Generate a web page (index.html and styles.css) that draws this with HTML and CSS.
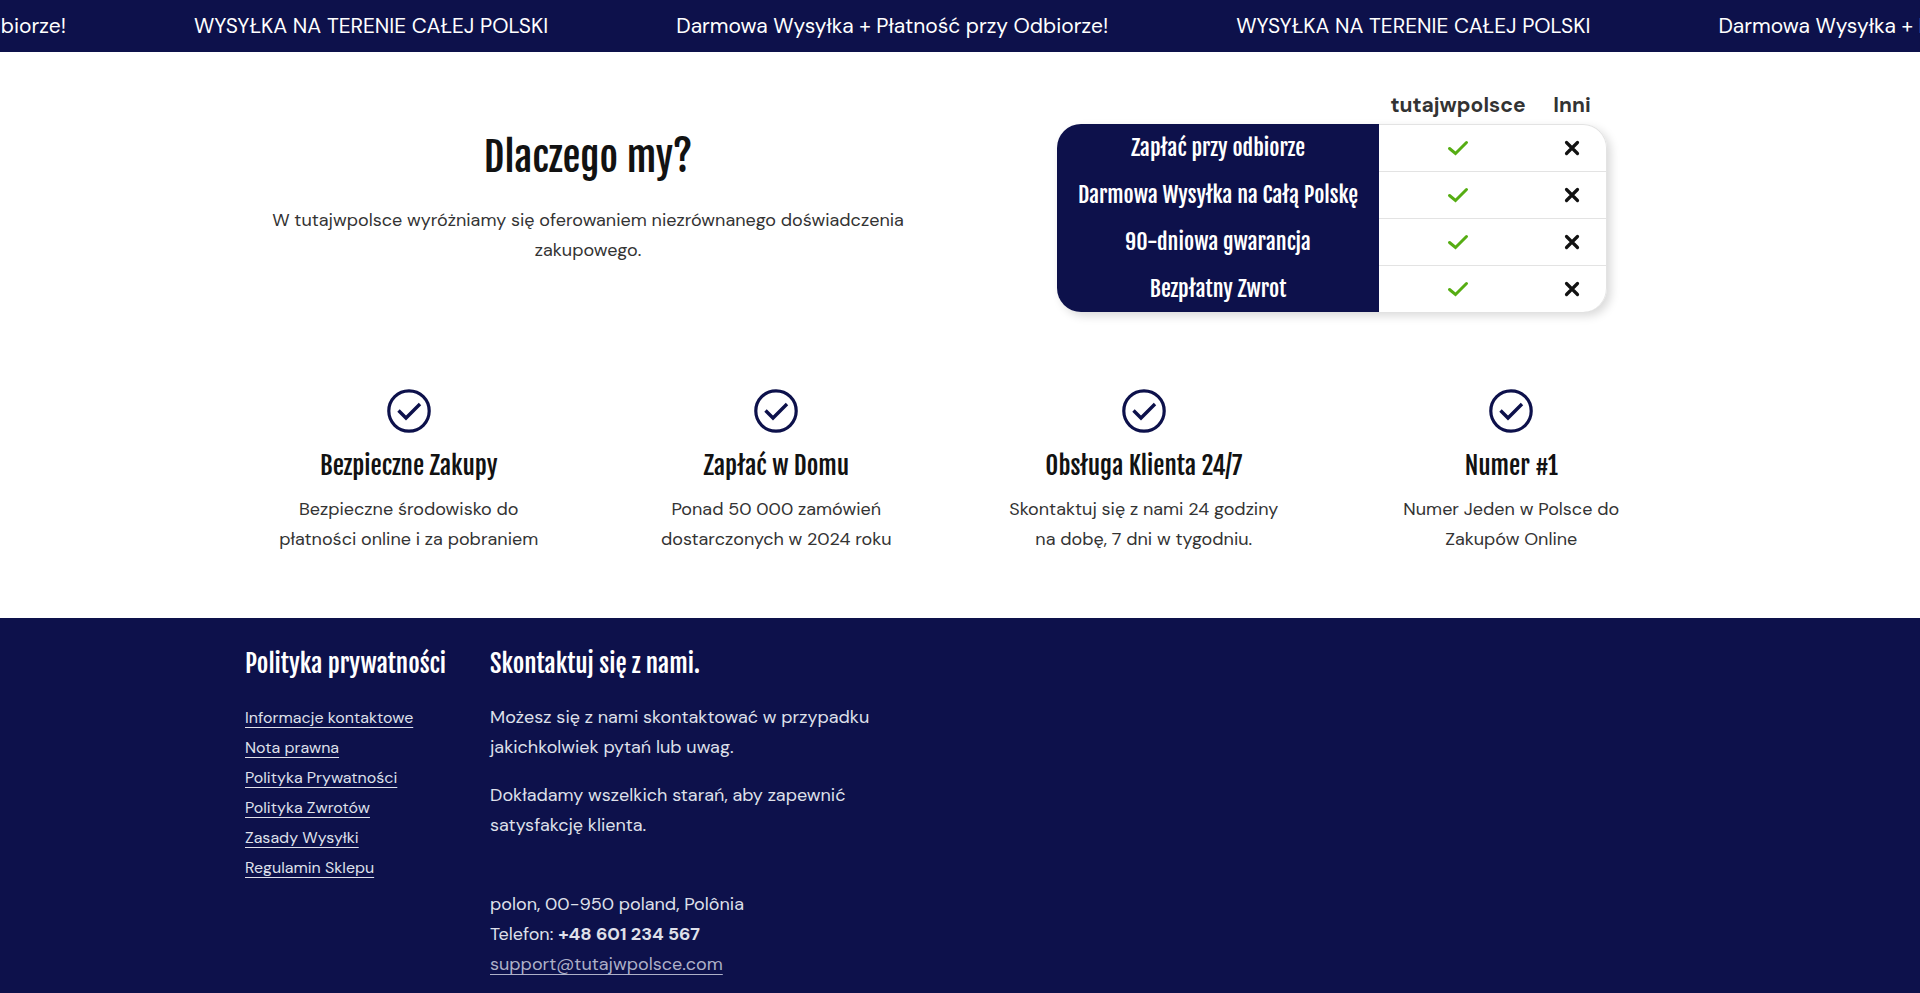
FILE: index.html
```html
<!DOCTYPE html>
<html lang="pl">
<head>
    <meta charset="UTF-8">
    <meta name="viewport" content="width=device-width, initial-scale=1.0">
    <title>tutajwpolsce</title>
    <link rel="stylesheet" href="styles.css">
</head>
<body>
    <!-- icons used more than once -->
    <svg class="icon-defs" aria-hidden="true">
        <symbol id="icon-check" viewBox="0 0 22 22">
            <path d="M2.5 11.5 L8.5 16.5 L19.5 5.5" fill="none" stroke="currentColor" stroke-width="3" stroke-linecap="round"/>
        </symbol>
        <symbol id="icon-cross" viewBox="0 0 20 20">
            <path d="M4.5 4.5 L15.5 15.5 M15.5 4.5 L4.5 15.5" fill="none" stroke="currentColor" stroke-width="3.2" stroke-linecap="round"/>
        </symbol>
        <symbol id="icon-circle-check" viewBox="0 0 44 44">
            <circle cx="22" cy="22" r="20.2" fill="none" stroke="currentColor" stroke-width="3.2"/>
            <path d="M11.5 21.5 L19 29 L33 15" fill="none" stroke="currentColor" stroke-width="3.4"/>
        </symbol>
    </svg>

    <div class="marquee">
        <div class="marquee-track">
            <span>Darmowa Wysyłka + Płatność przy Odbiorze!</span>
            <span>WYSYŁKA NA TERENIE CAŁEJ POLSKI</span>
            <span>Darmowa Wysyłka + Płatność przy Odbiorze!</span>
            <span>WYSYŁKA NA TERENIE CAŁEJ POLSKI</span>
            <span>Darmowa Wysyłka + Płatność przy Odbiorze!</span>
        </div>
    </div>

    <main>
        <section class="why container">
            <div class="why-text">
                <h2>Dlaczego my?</h2>
                <p>W tutajwpolsce wyróżniamy się oferowaniem niezrównanego doświadczenia zakupowego.</p>
            </div>
            <div class="why-table">
                <table>
                    <thead>
                        <tr><td></td><th scope="col">tutajwpolsce</th><th scope="col">Inni</th></tr>
                    </thead>
                    <tbody>
                        <tr>
                            <th scope="row">Zapłać przy odbiorze</th>
                            <td><svg class="check" role="img" aria-label="Tak"><use href="#icon-check"/></svg></td>
                            <td><svg class="cross" role="img" aria-label="Nie"><use href="#icon-cross"/></svg></td>
                        </tr>
                        <tr>
                            <th scope="row">Darmowa Wysyłka na Całą Polskę</th>
                            <td><svg class="check" role="img" aria-label="Tak"><use href="#icon-check"/></svg></td>
                            <td><svg class="cross" role="img" aria-label="Nie"><use href="#icon-cross"/></svg></td>
                        </tr>
                        <tr>
                            <th scope="row">90-dniowa gwarancja</th>
                            <td><svg class="check" role="img" aria-label="Tak"><use href="#icon-check"/></svg></td>
                            <td><svg class="cross" role="img" aria-label="Nie"><use href="#icon-cross"/></svg></td>
                        </tr>
                        <tr>
                            <th scope="row">Bezpłatny Zwrot</th>
                            <td><svg class="check" role="img" aria-label="Tak"><use href="#icon-check"/></svg></td>
                            <td><svg class="cross" role="img" aria-label="Nie"><use href="#icon-cross"/></svg></td>
                        </tr>
                    </tbody>
                </table>
            </div>
        </section>

        <section class="features container">
            <div class="feature">
                <svg aria-hidden="true"><use href="#icon-circle-check"/></svg>
                <h3>Bezpieczne Zakupy</h3>
                <p>Bezpieczne środowisko do<br>płatności online i za pobraniem</p>
            </div>
            <div class="feature">
                <svg aria-hidden="true"><use href="#icon-circle-check"/></svg>
                <h3>Zapłać w Domu</h3>
                <p>Ponad 50 000 zamówień<br>dostarczonych w 2024 roku</p>
            </div>
            <div class="feature">
                <svg aria-hidden="true"><use href="#icon-circle-check"/></svg>
                <h3>Obsługa Klienta 24/7</h3>
                <p>Skontaktuj się z nami 24 godziny<br>na dobę, 7 dni w tygodniu.</p>
            </div>
            <div class="feature">
                <svg aria-hidden="true"><use href="#icon-circle-check"/></svg>
                <h3>Numer #1</h3>
                <p>Numer Jeden w Polsce do<br>Zakupów Online</p>
            </div>
        </section>
    </main>

    <footer>
        <div class="footer-content container">
            <nav class="footer-links">
                <h2>Polityka prywatności</h2>
                <ul>
                    <li><a href="#">Informacje kontaktowe</a></li>
                    <li><a href="#">Nota prawna</a></li>
                    <li><a href="#">Polityka Prywatności</a></li>
                    <li><a href="#">Polityka Zwrotów</a></li>
                    <li><a href="#">Zasady Wysyłki</a></li>
                    <li><a href="#">Regulamin Sklepu</a></li>
                </ul>
            </nav>
            <div class="footer-contact">
                <h2>Skontaktuj się z nami.</h2>
                <p>Możesz się z nami skontaktować w przypadku jakichkolwiek pytań lub uwag.</p>
                <p>Dokładamy wszelkich starań, aby zapewnić satysfakcję klienta.</p>
                <address>
                    polon, 00-950 poland, Polônia<br>
                    Telefon: <strong>+48 601 234 567</strong><br>
                    <a href="mailto:support@tutajwpolsce.com">support@tutajwpolsce.com</a>
                </address>
            </div>
        </div>
    </footer>
</body>
</html>
```
FILE: styles.css
```css
* {
    box-sizing: border-box;
}
body {
    display: flex;
    flex-direction: column;
    min-height: 100vh;
    margin: 0;
    background-color: #fff;
    color: #333;
    font-family: "DM Sans", Inter, sans-serif;
    font-size: 18px;
    line-height: 30px;
}
h2, h3, tbody th {
    font-family: "Fjalla One", "Liberation Sans Narrow", sans-serif;
    font-weight: normal;
}
h2, h3, p, ul {
    margin: 0;
}
.container {
    width: 100%;
    max-width: 1470px;
    margin: 0 auto;
}
.icon-defs {
    position: absolute;
    width: 0;
    height: 0;
}

/* Announcement bar */
.marquee {
    overflow: hidden;
    background-color: #0d114b;
    color: #fff;
}
.marquee-track {
    display: flex;
    gap: 128px;
    margin-left: -366px;
    padding: 11px 0;
    font-size: 21px;
    white-space: nowrap;
}
.marquee-track span {
    flex: none;
}

/* Comparison */
.why {
    display: grid;
    grid-template-columns: 1fr 1fr;
    gap: 18px;
    padding-top: 36px;
    text-align: center;
}
.why-text {
    padding: 41px 20px 0;
}
.why-text h2 {
    margin-bottom: 20px;
    color: #121212;
    font-size: 40px;
    line-height: 56px;
}
.why-table {
    display: flex;
    justify-content: center;
}
table {
    width: 550px;
    border-collapse: separate;
    border-spacing: 0;
    table-layout: fixed;
}
th, td {
    padding: 0;
}
thead th {
    width: 70px;
    height: 36px;
    padding-bottom: 2px;
    font-size: 21px;
}
thead th:nth-child(2) {
    width: 158px;
}
tbody {
    border-radius: 24px;
    box-shadow: 4px 4px 10px rgba(0, 0, 0, 0.15);
}
tbody th {
    height: 47px;
    background-color: #0d114b;
    color: #fff;
    font-size: 22px;
}
tbody td {
    border-top: 1px solid #e3e3e3;
}
tbody td:last-child {
    border-right: 1px solid #e3e3e3;
}
tbody tr:first-child th {
    border-top-left-radius: 24px;
}
tbody tr:last-child th {
    border-bottom-left-radius: 24px;
}
tbody tr:first-child td:last-child {
    border-top-right-radius: 24px;
}
tbody tr:last-child td:last-child {
    border-bottom-right-radius: 24px;
}
tbody svg {
    display: block;
    margin: 0 auto;
}
.check {
    width: 22px;
    height: 22px;
    color: #56ad13;
}
.cross {
    width: 20px;
    height: 20px;
    color: #121212;
}

/* Features */
.features {
    display: grid;
    grid-template-columns: repeat(4, 1fr);
    padding: 77px 0 64px;
    text-align: center;
}
.feature svg {
    display: block;
    width: 44px;
    height: 44px;
    margin: 0 auto 15px;
    color: #0d114b;
}
.feature h3 {
    margin-bottom: 10px;
    color: #121212;
    font-size: 25px;
    line-height: 36px;
}

/* Footer */
footer {
    flex: 1;
    background-color: #0d114b;
    color: #dfe0ea;
}
.footer-content {
    display: grid;
    grid-template-columns: 245px 410px;
    padding: 28px 20px 12px;
}
footer h2 {
    margin-bottom: 20px;
    color: #fff;
    font-size: 25px;
    line-height: 36px;
    white-space: nowrap;
}
.footer-links ul {
    padding: 1px 0;
    list-style: none;
    font-size: 16px;
}
footer a {
    color: inherit;
    text-underline-offset: 4px;
}
.footer-contact p {
    margin-bottom: 18px;
}
address {
    margin-top: 49px;
    font-style: normal;
}
address a {
    color: #aeb0c8;
}
```
